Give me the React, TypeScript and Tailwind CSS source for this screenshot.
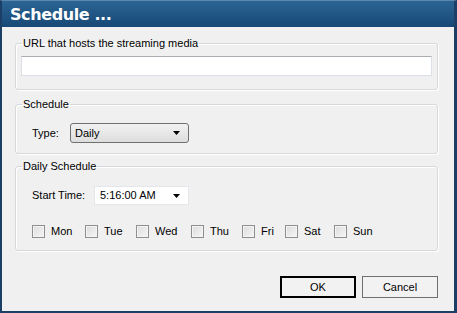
import React from 'react';

const days = [
  { label: 'Mon', w: 'w-[53px]' },
  { label: 'Tue', w: 'w-[51px]' },
  { label: 'Wed', w: 'w-[55px]' },
  { label: 'Thu', w: 'w-[51px]' },
  { label: 'Fri', w: 'w-[43px]' },
  { label: 'Sat', w: 'w-[49px]' },
  { label: 'Sun', w: 'w-[50px]' },
];

const Arrow: React.FC = () => (
  <svg width="8" height="4" viewBox="0 0 8 4" className="shrink-0">
    <path d="M0 0 H7 L3.5 4 Z" fill="#000" />
  </svg>
);

const Group: React.FC<{ title: string; className?: string; children: React.ReactNode }> = ({ title, className, children }) => (
  <fieldset className={`border border-[#d5d9dc] rounded-[3px] px-[5px] shadow-[inset_1px_1px_0_#fff,1px_1px_0_#fff] ${className ?? ''}`}>
    <legend className="ml-[1px] px-[1px] leading-[14px]">{title}</legend>
    {children}
  </fieldset>
);

const App: React.FC = () => {
  return (
    <div className="w-[457px] h-[313px] flex flex-col bg-[#f0f0f0] text-[11px] text-black font-['Liberation_Sans',Arial,sans-serif] overflow-hidden">
      {/* title bar */}
      <div className="h-[27px] shrink-0 flex items-center pl-[8px] border-t border-[#5b86ad] border-l-2 border-l-[#1c3f66] border-r-[3px] border-r-[#1c3f66] bg-gradient-to-b from-[#2b6593] to-[#174877]">
        <span className="text-white font-bold text-[16px] tracking-[-0.4px] font-['DejaVu_Sans',Verdana,sans-serif] leading-none mt-[1px]">Schedule ...</span>
      </div>

      {/* body */}
      <div className="flex-1 flex flex-col pt-[9px] pl-[13px] pr-[16px] border-l-2 border-r-[3px] border-b-2 border-[#1c3f66]">
        <Group title="URL that hosts the streaming media" className="pt-[6px] pb-[13px]">
          <input
            type="text"
            className="w-full h-[20px] bg-white border border-[#dbdfe6] border-t-[#abadb3] outline-none"
          />
        </Group>

        <Group title="Schedule" className="mt-[7px] pt-[12px] pb-[10px]">
          <div className="flex items-center h-[20px] pl-[11px]">
            <span className="w-[38px]">Type:</span>
            <div className="w-[119px] h-[20px] flex items-center justify-between pl-[4px] pr-[7px] border border-[#707070] rounded-[3px] bg-gradient-to-b from-[#f2f2f2] to-[#dddddd]">
              <span>Daily</span>
              <Arrow />
            </div>
          </div>
        </Group>

        <Group title="Daily Schedule" className="mt-[5px] pt-[13px] pb-[12px]">
          <div className="flex items-center h-[19px] pl-[11px]">
            <span className="w-[62px]">Start Time:</span>
            <div className="w-[95px] h-[19px] flex items-center justify-between pl-[5px] pr-[7px] bg-white border border-[#e3e6ea]">
              <span>5:16:00 AM</span>
              <Arrow />
            </div>
          </div>
          <div className="flex items-center mt-[20px] h-[13px] pl-[11px]">
            {days.map((d) => (
              <label key={d.label} className={`flex items-center gap-[6px] ${d.w}`}>
                <span className="w-[13px] h-[13px] shrink-0 border border-[#8e8f8f] bg-gradient-to-br from-[#dcdcdc] to-[#f6f6f6] shadow-[inset_0_0_0_1px_#f4f4f4]" />
                <span>{d.label}</span>
              </label>
            ))}
          </div>
        </Group>

        <div className="flex justify-end gap-[6px] mt-[25px]">
          <button className="w-[76px] h-[22px] border-2 border-black bg-[#f2f2f2] text-[11px]">OK</button>
          <button className="w-[76px] h-[22px] border border-[#707070] bg-[#f2f2f2] text-[11px]">Cancel</button>
        </div>
      </div>
    </div>
  );
};

export default App;
